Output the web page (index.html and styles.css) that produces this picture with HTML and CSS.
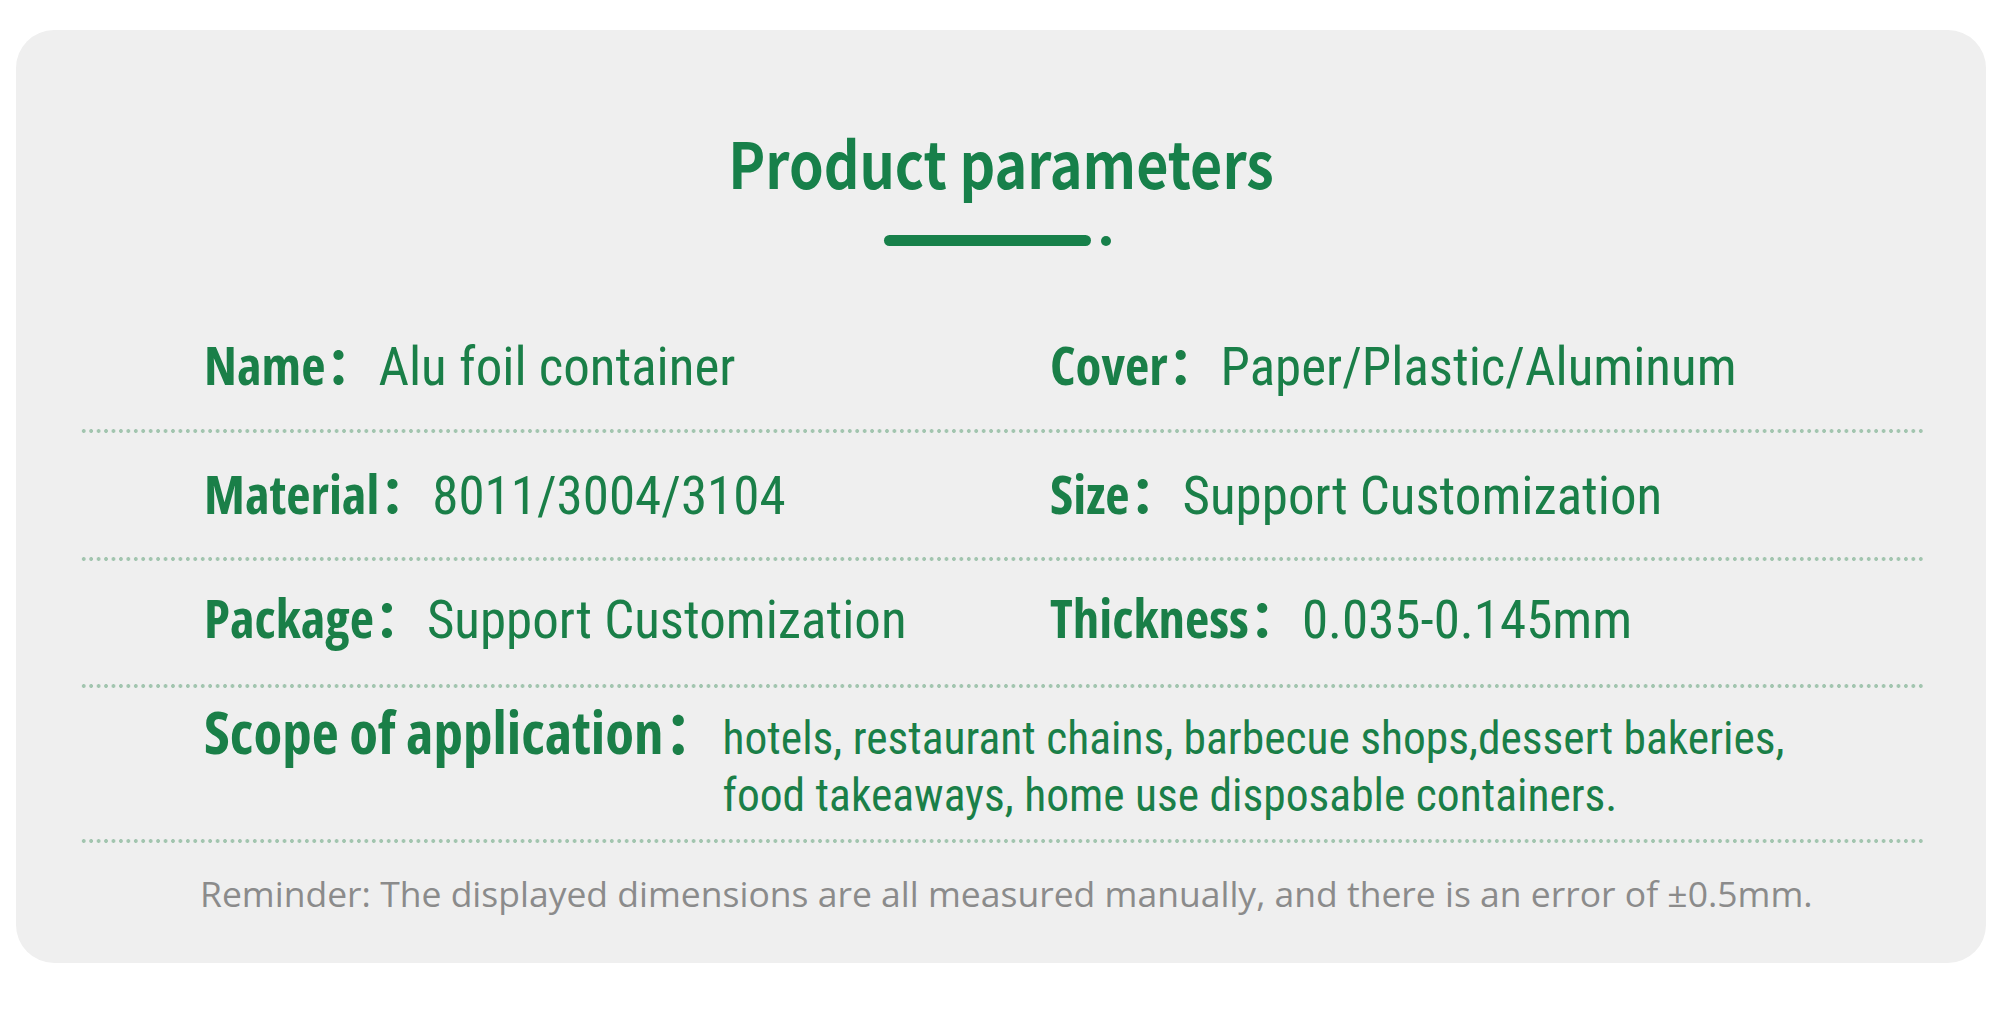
FILE: index.html
```html
<!DOCTYPE html>
<html lang="en">
<head>
<meta charset="utf-8">
<title>Product parameters</title>
<link rel="stylesheet" href="styles.css">
</head>
<body>
<div class="page">
  <section class="card">
    <h1 class="title">Product parameters</h1>
    <div class="title-mark"><span class="bar"></span><span class="dot"></span></div>

    <div class="table">
      <div class="row row-1">
        <div class="cell"><span class="label">Name：</span><span class="value">Alu foil container</span></div>
        <div class="cell"><span class="label">Cover：</span><span class="value">Paper/Plastic/Aluminum</span></div>
      </div>
      <div class="divider"></div>
      <div class="row row-2">
        <div class="cell"><span class="label">Material：</span><span class="value">8011/3004/3104</span></div>
        <div class="cell"><span class="label">Size：</span><span class="value">Support Customization</span></div>
      </div>
      <div class="divider"></div>
      <div class="row row-3">
        <div class="cell"><span class="label">Package：</span><span class="value">Support Customization</span></div>
        <div class="cell"><span class="label">Thickness：</span><span class="value">0.035-0.145mm</span></div>
      </div>
      <div class="divider"></div>
      <div class="row row-4">
        <div class="cell"><span class="label label-lg">Scope of application：</span><span class="value value-sm">hotels, restaurant chains, barbecue shops,dessert bakeries,<br>food takeaways, home use disposable containers.</span></div>
      </div>
      <div class="divider"></div>
    </div>

    <p class="reminder">Reminder: The displayed dimensions are all measured manually, and there is an error of ±0.5mm.</p>
  </section>
</div>
</body>
</html>
```
FILE: styles.css
```css
html, body {
  margin: 0;
  padding: 0;
  background: #ffffff;
}

.page {
  padding: 30px 14px 53px 16px;
}

.card {
  box-sizing: border-box;
  height: 933px;
  background: #efefef;
  border-radius: 38px;
  padding-top: 91px;
  color: #1a7f48;
}

.title {
  margin: 0;
  font-family: "Noto Sans CJK SC", "Open Sans", sans-serif;
  font-size: 64px;
  line-height: 80px;
  font-weight: 700;
  text-align: center;
  color: #17804a;
  transform: scaleX(0.868);
}

.title-mark {
  display: flex;
  justify-content: center;
  align-items: center;
  gap: 10px;
  margin-top: 34px;
  padding-right: 7px;
  height: 11px;
}

.bar {
  width: 207px;
  height: 11px;
  border-radius: 6px;
  background: #17804a;
}

.dot {
  width: 10px;
  height: 10px;
  border-radius: 50%;
  background: #17804a;
}

.table {
  margin: 57px 60px 0 64px;
}

.row {
  box-sizing: border-box;
  display: grid;
  grid-template-columns: 846px 1fr;
  align-items: center;
  padding-left: 124px;
}

.row-1 { height: 126px; }
.row-2 { height: 124px; }
.row-3 { height: 123px; padding-bottom: 7px; }
.row-4 { height: 151px; grid-template-columns: 1fr; }

.cell {
  display: flex;
  align-items: baseline;
  white-space: nowrap;
  line-height: 60px;
}

.label {
  font-family: "Open Sans", "Noto Sans CJK SC", sans-serif;
  font-size: 53px;
  font-weight: 700;
  font-stretch: 75%;
}

.value {
  font-family: Roboto, "Noto Sans CJK SC", sans-serif;
  font-size: 53px;
  font-weight: 400;
  font-stretch: 75%;
}

.label-lg {
  font-size: 59px;
  line-height: 57px;
}

.value-sm {
  font-size: 45.5px;
  line-height: 57px;
}

.divider {
  height: 4px;
  background-image: radial-gradient(circle at center, #a2c5af 1.6px, rgba(162, 197, 175, 0) 2.2px);
  background-size: 7.45px 4px;
  background-repeat: repeat-x;
}

.reminder {
  margin: 0;
  padding-left: 184px;
  line-height: 100px;
  font-family: "Open Sans", sans-serif;
  font-size: 35.5px;
  font-weight: 400;
  color: #8b8b8b;
}
```
